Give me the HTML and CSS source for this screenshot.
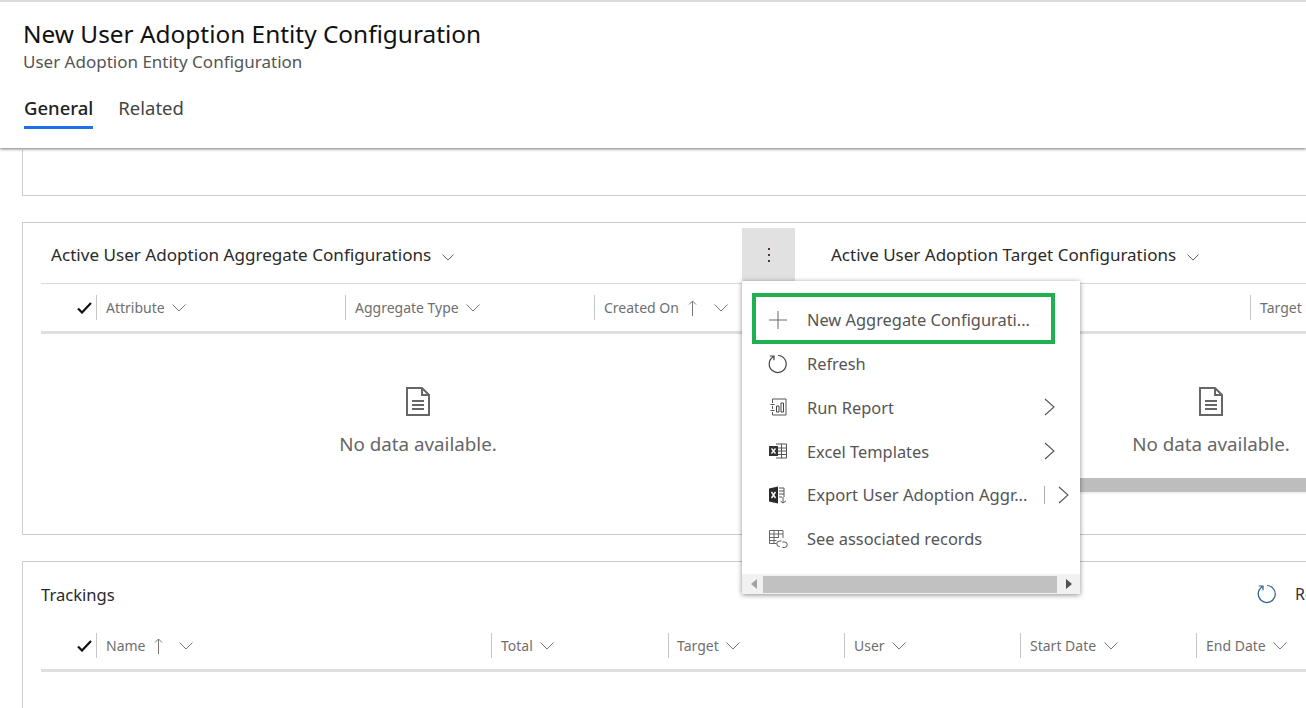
FILE: index.html
```html
<!DOCTYPE html>
<html>

<head>
    <title>New User Adoption Entity Configuration</title>
    <link rel="stylesheet" href="styles.css">
</head>

<body>
    <svg class="defs" width="0" height="0">
        <symbol id="chev" viewBox="0 0 14 8"><path d="M.5.5 7 7 13.500.5" fill="none" stroke="currentColor" stroke-width="1"/></symbol>
        <symbol id="check" viewBox="0 0 15 12"><path d="M1 6.500 5 10.500 14 1" fill="none" stroke="currentColor" stroke-width="2.200"/></symbol>
        <symbol id="up" viewBox="0 0 9 16"><path d="M4.500 16V1M1 4.500 4.500 1 8 4.500" fill="none" stroke="currentColor" stroke-width="1"/></symbol>
        <symbol id="right" viewBox="0 0 11 18"><path d="M1 1 10 9 1 17" fill="none" stroke="currentColor" stroke-width="1.100"/></symbol>
        <symbol id="doc" viewBox="0 0 24 29"><path d="M1 1H16L23 8V28H1ZM16 1V8H23M6 14H18M6 18H18M6 22H18" fill="none" stroke="currentColor" stroke-width="2"/></symbol>
        <symbol id="refresh" viewBox="0 0 20 20"><path d="M5.200 2.800A8.500 8.500 0 1 0 10 1.500M1.800 2H6V6.200" fill="none" stroke="currentColor" stroke-width="1.200"/></symbol>
    </svg>

    <header class="page-head">
        <h1 class="title">New User Adoption Entity Configuration</h1>
        <div class="subtitle">User Adoption Entity Configuration</div>
        <nav class="tabs">
            <a class="tab active">General</a>
            <a class="tab">Related</a>
        </nav>
    </header>

    <main class="content">
        <section class="card card-top"></section>

        <section class="card card-grids">
            <div class="subgrid subgrid-left">
                <div class="view-bar">
                    <div class="view-name">Active User Adoption Aggregate Configurations <svg class="view-chev"><use href="#chev"/></svg></div>
                    <div class="more-wrap">
                        <button class="more-btn"><i></i><i></i><i></i></button>
                        <div class="menu">
                            <div class="menu-item">
                                <span class="menu-icon"><svg width="18" height="18" viewBox="0 0 18 18"><path d="M9 0V18M0 9H18" fill="none" stroke="#6b6b6b" stroke-width="1"/></svg></span>
                                <span class="menu-label">New Aggregate Configurati...</span>
                            </div>
                            <div class="menu-item">
                                <span class="menu-icon"><svg class="ic-refresh" width="20" height="20"><use href="#refresh"/></svg></span>
                                <span class="menu-label">Refresh</span>
                            </div>
                            <div class="menu-item">
                                <span class="menu-icon"><svg width="18" height="18" viewBox="0 0 18 18"><path d="M3.500 1H17V17H3.500M3.500 1V5M3.500 8V11M3.500 14V17M1.500 6.500H5.500M1.500 12.500H5.500" fill="none" stroke="#555" stroke-width="1"/><path d="M7.500 8H10V14H7.500ZM12 5H14.500V14H12Z" fill="none" stroke="#444" stroke-width="1"/></svg></span>
                                <span class="menu-label">Run Report</span>
                                <svg class="menu-arrow"><use href="#right"/></svg>
                            </div>
                            <div class="menu-item">
                                <span class="menu-icon"><svg width="18" height="16" viewBox="0 0 18 16"><path d="M7 1H17.500V15H7M7 5H17.500M7 8H17.500M7 11.500H17.500M12.500 1V15" fill="none" stroke="#555" stroke-width="1"/><path d="M0 3H9V13H0Z" fill="#333"/><path d="M2.500 5.500 6.500 10.500M6.500 5.500 2.500 10.500" stroke="#fff" stroke-width="1.300"/></svg></span>
                                <span class="menu-label">Excel Templates</span>
                                <svg class="menu-arrow"><use href="#right"/></svg>
                            </div>
                            <div class="menu-item">
                                <span class="menu-icon"><svg width="18" height="18" viewBox="0 0 18 18"><path d="M0 2.500 9 .5V17.500L0 15.500Z" fill="#2b2b2b"/><path d="M2.500 6 6.500 12M6.500 6 2.500 12" stroke="#fff" stroke-width="1.400"/><path d="M10 2H15V11M10 5H15M10 8H15M10 11H13M14 11V16.500M11.500 15 14 17 17 15" fill="none" stroke="#555" stroke-width="1"/></svg></span>
                                <span class="menu-label export-label">Export User Adoption Aggr...</span>
                                <span class="menu-split"></span>
                                <svg class="menu-arrow menu-arrow-split"><use href="#right"/></svg>
                            </div>
                            <div class="menu-item">
                                <span class="menu-icon"><svg width="19" height="18" viewBox="0 0 19 18"><path d="M.5.5H14V8M.5.500V13.500H7.500M.5 4H14M.5 7.500H10M.5 10.500H7.500M5 .5V13.500M9.500.5V8" fill="none" stroke="#666" stroke-width="1"/><path d="M11 16.500H10.500A2.700 2.700 0 0 1 10.500 11H12.500M13.500 12H15.500A2.700 2.700 0 0 1 15.500 17.500H13.500" fill="none" stroke="#555" stroke-width="1"/></svg></span>
                                <span class="menu-label">See associated records</span>
                            </div>
                            <div class="menu-scroll">
                                <span class="arrow-left"></span>
                                <span class="thumb"></span>
                                <span class="arrow-right"></span>
                            </div>
                        </div>
                    </div>
                </div>
                <div class="grid-head">
                    <div class="check-col"><svg class="ic-check"><use href="#check"/></svg></div>
                    <div class="col w249">Attribute <svg class="col-chev"><use href="#chev"/></svg></div>
                    <div class="col w249">Aggregate Type <svg class="col-chev"><use href="#chev"/></svg></div>
                    <div class="col">Created On <svg class="ic-up"><use href="#up"/></svg> <svg class="col-chev far"><use href="#chev"/></svg></div>
                </div>
                <div class="empty">
                    <svg class="ic-doc"><use href="#doc"/></svg>
                    <div class="empty-text">No data available.</div>
                </div>
            </div>

            <div class="subgrid subgrid-right">
                <div class="view-bar">
                    <div class="view-name view-name-right">Active User Adoption Target Configurations <svg class="view-chev"><use href="#chev"/></svg></div>
                </div>
                <div class="grid-head grid-head-right">
                    <div class="col">Target</div>
                </div>
                <div class="empty">
                    <svg class="ic-doc"><use href="#doc"/></svg>
                    <div class="empty-text">No data available.</div>
                </div>
                <div class="grid-scroll"></div>
            </div>
        </section>

        <section class="card card-track">
            <div class="track-bar">
                <div class="track-name">Trackings</div>
                <div class="track-action"><svg class="ic-blue" width="20" height="20"><use href="#refresh"/></svg> Refresh</div>
            </div>
            <div class="grid-head">
                <div class="check-col"><svg class="ic-check"><use href="#check"/></svg></div>
                <div class="col w395">Name <svg class="ic-up"><use href="#up"/></svg> <svg class="col-chev far2"><use href="#chev"/></svg></div>
                <div class="col w177">Total <svg class="col-chev"><use href="#chev"/></svg></div>
                <div class="col w176 tight">Target <svg class="col-chev"><use href="#chev"/></svg></div>
                <div class="col w176">User <svg class="col-chev"><use href="#chev"/></svg></div>
                <div class="col w176">Start Date <svg class="col-chev"><use href="#chev"/></svg></div>
                <div class="col w176">End Date <svg class="col-chev"><use href="#chev"/></svg></div>
            </div>
        </section>
    </main>

    <div class="callout"></div>
</body>
</html>
```

FILE: styles.css
```css
html, body {
    margin: 0;
    height: 100%;
    overflow: hidden;
}

body {
    font-family: "Noto Sans", "Open Sans", sans-serif;
    background-color: #fff;
    color: #222;
}

.defs {
    display: block;
    height: 0;
}

.page-head {
    position: relative;
    z-index: 2;
    height: 148px;
    box-sizing: border-box;
    padding: 19px 0 0 23px;
    background-color: #fff;
    border-top: 2px solid #dcdcdc;
    box-shadow: 0 1px 3px rgba(0, 0, 0, 0.55);
    margin-bottom: 2px;
}

.title {
    margin: 0;
    font-size: 24.400px;
    line-height: 26px;
    font-weight: 400;
    color: #111;
}

.subtitle {
    font-size: 17px;
    line-height: 26px;
    color: #555;
    margin-top: 2px;
}

.tabs {
    display: flex;
    gap: 25px;
    margin-top: 20px;
}

.tab {
    font-size: 18.500px;
    line-height: 25px;
    color: #444;
    padding-bottom: 6px;
    border-bottom: 3px solid transparent;
}

.tab.active {
    color: #222;
    font-weight: 500;
    border-bottom-color: #1f6feb;
    margin-left: 1px;
}

.content {
    padding-left: 22px;
    width: 1400px;
}

.card {
    border: 1px solid #ccc;
    background-color: #fff;
    margin-bottom: 26px;
}

.card-top {
    height: 45px;
    border-top: 0;
}

.card-grids {
    display: flex;
    padding: 5px 0 0 18px;
    height: 306px;
}

.subgrid-left {
    width: 754px;
    flex: none;
}

.subgrid-right {
    width: 780px;
    flex: none;
    margin-left: 26px;
}

.view-bar {
    display: flex;
    justify-content: space-between;
    height: 55px;
    border-bottom: 1px solid #d8d8d8;
}

.view-name {
    padding-left: 10px;
    font-size: 17.100px;
    line-height: 53px;
    color: #2a2a2a;
}

.view-name-right {
    padding-left: 10px;
    font-size: 17px;
}

.view-chev {
    width: 12px;
    height: 7px;
    margin-left: 6px;
    color: #444;
}

.more-wrap {
    position: relative;
    width: 53px;
    z-index: 3;
}

.more-btn {
    display: flex;
    flex-direction: column;
    align-items: center;
    justify-content: center;
    gap: 4px;
    width: 53px;
    height: 53px;
    padding: 0;
    border: 0;
    background-color: #e1e1e1;
}

.more-btn i {
    width: 2px;
    height: 2px;
    background-color: #4a3c34;
}

.menu {
    position: absolute;
    top: 53px;
    left: 0;
    width: 338px;
    height: 313px;
    box-sizing: border-box;
    padding-top: 17px;
    background-color: #fff;
    box-shadow: 0 1px 5px rgba(0, 0, 0, 0.45);
}

.menu-item {
    display: flex;
    align-items: center;
    height: 43.750px;
    color: #555;
}

.menu-icon {
    display: flex;
    justify-content: center;
    width: 72px;
    flex: none;
    box-sizing: border-box;
}

.menu-label {
    margin-left: -7px;
    white-space: nowrap;
    font-size: 16.400px;
}

.export-label {
    font-size: 16.600px;
}

.menu-arrow {
    position: absolute;
    left: 302px;
    width: 11px;
    height: 18px;
    color: #555;
}

.menu-arrow-split {
    left: 316px;
}

.menu-split {
    position: absolute;
    left: 302px;
    width: 1px;
    height: 18px;
    background-color: #aaa;
}

.ic-refresh {
    color: #444;
}

.menu-scroll {
    position: absolute;
    left: 0;
    right: 0;
    bottom: 0;
    height: 20px;
    display: flex;
    align-items: center;
    background-color: #f1f1f1;
}

.menu-scroll .thumb {
    width: 294px;
    height: 17px;
    margin-left: 6px;
    background-color: #c1c1c1;
}

.arrow-left {
    width: 0;
    height: 0;
    margin-left: 9px;
    border: 5px solid transparent;
    border-left: 0;
    border-right: 6px solid #a3a3a3;
}

.arrow-right {
    width: 0;
    height: 0;
    margin-left: 9px;
    border: 5px solid transparent;
    border-right: 0;
    border-left: 6px solid #505050;
}

.grid-head {
    display: flex;
    align-items: center;
    height: 47px;
    border-bottom: 3px solid #e1dfdd;
}

.grid-head-right {
    padding-left: 429px;
}

.check-col {
    width: 55px;
    flex: none;
    height: 25px;
    display: flex;
    align-items: center;
    justify-content: flex-end;
}

.ic-check {
    width: 15px;
    height: 12px;
    margin-right: 4px;
    color: #111;
}

.col {
    display: flex;
    align-items: center;
    height: 25px;
    box-sizing: border-box;
    padding-left: 9px;
    border-left: 1px solid #c8c6c4;
    font-size: 14px;
    color: #6f6f6f;
    white-space: pre;
    flex: none;
}

.col.tight {
    padding-left: 8px;
}

.w249 {
    width: 249px;
}

.w395 {
    width: 395px;
}

.w177 {
    width: 177px;
}

.w176 {
    width: 176px;
}

.col-chev {
    width: 14px;
    height: 8px;
    margin-left: 4px;
    color: #777;
}

.col-chev.far {
    margin-left: 17px;
}

.col-chev.far2 {
    margin-left: 16px;
}

.ic-up {
    width: 9px;
    height: 16px;
    margin-left: 5px;
    color: #777;
}

.empty {
    display: flex;
    flex-direction: column;
    align-items: center;
    padding-top: 53px;
}

.ic-doc {
    width: 24px;
    height: 29px;
    color: #666;
}

.empty-text {
    margin-top: 15px;
    font-size: 18.800px;
    line-height: 26px;
    color: #666;
}

.grid-scroll {
    height: 14px;
    margin-top: 21px;
    background-color: #bdbdbd;
    border-bottom: 2px solid #f1f1f1;
}

.card-track {
    height: 200px;
    padding-left: 18px;
}

.track-bar {
    display: flex;
    justify-content: space-between;
    align-items: center;
    height: 56px;
    padding-top: 4px;
}

.track-name {
    font-size: 16.600px;
    color: #2a2a2a;
}

.track-action {
    display: flex;
    align-items: center;
    gap: 18px;
    width: 164px;
    font-size: 16px;
    color: #333;
}

.ic-blue {
    color: #2b5f8a;
}

/* green highlight drawn over the menu */
.callout {
    position: absolute;
    left: 752px;
    top: 293px;
    width: 295px;
    height: 43px;
    border: 4px solid #1fb04f;
    z-index: 5;
}
```
